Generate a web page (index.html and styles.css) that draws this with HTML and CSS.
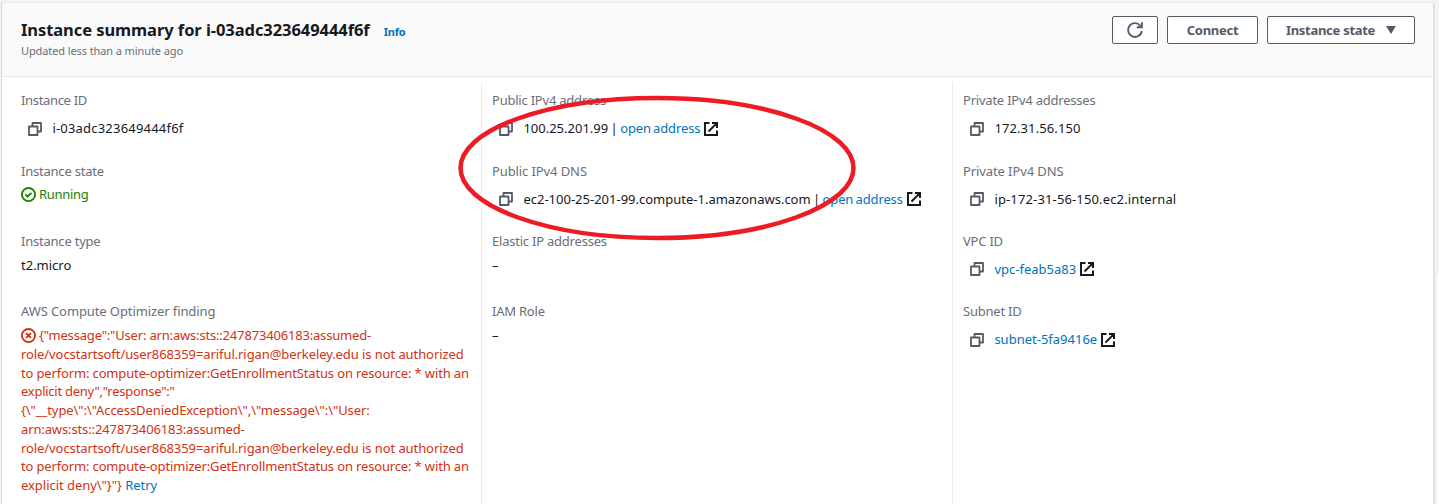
FILE: index.html
```html
<!DOCTYPE html>
<html lang="en">
<head>
<meta charset="utf-8">
<title>Instance summary</title>
<link rel="stylesheet" href="styles.css">
</head>
<body>
<svg class="sprite" aria-hidden="true">
  <symbol id="copy" viewBox="0 0 14 14"><path d="M1 4.5h8.5V13H1zM4.5 4.5V1H13v8.5H9.5" fill="none" stroke="#545b64" stroke-width="1.8" stroke-linejoin="round"/></symbol>
  <symbol id="external" viewBox="0 0 14 14"><path d="M5.5 1H1v12h12V8.5M8 1h5v5M12.6 1.4L4.5 9.5" fill="none" stroke="#16191f" stroke-width="2"/></symbol>
</svg>
<main class="card">
  <header class="header">
    <div class="heading">
      <div class="title-row"><h1 class="title">Instance summary for i-03adc323649444f6f</h1><a class="info">Info</a></div>
      <p class="updated">Updated less than a minute ago</p>
    </div>
    <div class="actions">
      <button class="btn btn-refresh" aria-label="Refresh"><svg class="refresh" viewBox="0 0 16 16"><path d="M14.8 9A6.9 6.9 0 1 1 13.4 3.8M14.9 .2v5.1H9.8" fill="none" stroke="#545b64" stroke-width="1.9"/></svg></button>
      <button class="btn btn-connect">Connect</button>
      <button class="btn btn-state">Instance state<svg class="caret" viewBox="0 0 10 8"><path d="M0 0h10L5 8z" fill="#545b64"/></svg></button>
    </div>
  </header>
  <div class="columns">
    <section class="col">
      <div class="item"><div class="label label-short">Instance ID</div><div class="value copyable"><svg class="copy"><use href="#copy"/></svg><span class="id">i-03adc323649444f6f</span></div></div>
      <div class="item"><div class="label">Instance state</div><div class="value ok"><svg class="status" viewBox="0 0 16 16"><g fill="none" stroke="#1d8102" stroke-width="2"><circle cx="8" cy="8" r="7"/><path d="M4.7 7.8l2.4 2.4 4-4"/></g></svg>Running</div></div>
      <div class="item"><div class="label">Instance type</div><div class="value">t2.micro</div></div>
      <div class="item"><div class="label label-long">AWS Compute Optimizer finding</div><div class="value error"><svg class="status" viewBox="0 0 16 16"><g fill="none" stroke="#d13212" stroke-width="2"><circle cx="8" cy="8" r="7"/><path d="M5.4 5.4l5.2 5.2M10.6 5.4l-5.2 5.2"/></g></svg><span class="e1">{"message":"User: arn:aws:sts::247873406183:assumed-</span><br><span class="e2">role/vocstartsoft/user868359=ariful.rigan@berkeley.edu is not authorized</span><br><span class="e3">to perform: compute-optimizer:GetEnrollmentStatus on resource: * with an</span><br><span class="e4">explicit deny","response":"</span><br><span class="e5">{\"__type\":\"AccessDeniedException\",\"message\":\"User:</span><br><span class="e6">arn:aws:sts::247873406183:assumed-</span><br><span class="e2">role/vocstartsoft/user868359=ariful.rigan@berkeley.edu is not authorized</span><br><span class="e3">to perform: compute-optimizer:GetEnrollmentStatus on resource: * with an</span><br><span class="e7">explicit deny\"}"} <a>Retry</a></span></div></div>
    </section>
    <section class="col">
      <div class="item"><div class="label">Public IPv4 address</div><div class="value copyable"><svg class="copy"><use href="#copy"/></svg><span class="linked">100.25.201.99 | <a>open address</a></span><svg class="ext"><use href="#external"/></svg></div></div>
      <div class="item"><div class="label label-long">Public IPv4 DNS</div><div class="value copyable"><svg class="copy"><use href="#copy"/></svg><span class="linked">ec2-100-25-201-99.compute-1.amazonaws.com | <a>open address</a></span><svg class="ext"><use href="#external"/></svg></div></div>
      <div class="item"><div class="label">Elastic IP addresses</div><div class="value">–</div></div>
      <div class="item"><div class="label">IAM Role</div><div class="value">–</div></div>
    </section>
    <section class="col">
      <div class="item"><div class="label">Private IPv4 addresses</div><div class="value copyable"><svg class="copy"><use href="#copy"/></svg><span class="pip">172.31.56.150</span></div></div>
      <div class="item"><div class="label label-long">Private IPv4 DNS</div><div class="value copyable"><svg class="copy"><use href="#copy"/></svg><span class="pdns">ip-172-31-56-150.ec2.internal</span></div></div>
      <div class="item"><div class="label">VPC ID</div><div class="value copyable"><svg class="copy"><use href="#copy"/></svg><a>vpc-feab5a83</a><svg class="ext"><use href="#external"/></svg></div></div>
      <div class="item"><div class="label">Subnet ID</div><div class="value copyable"><svg class="copy"><use href="#copy"/></svg><a>subnet-5fa9416e</a><svg class="ext"><use href="#external"/></svg></div></div>
    </section>
  </div>
</main>
<div class="page-edge"></div>
<svg class="annotation" viewBox="0 0 400 146"><ellipse cx="200" cy="73" rx="196.5" ry="70" fill="none" stroke="#ed1c24" stroke-width="4.5"/></svg>
</body>
</html>
```

FILE: styles.css
```css
* { box-sizing: border-box; }
body {
  margin: 0;
  height: 504px;
  overflow: hidden;
  display: flex;
  background: #f2f3f3;
  color: #16191f;
  font: 13px/18.75px "Noto Sans", "Open Sans", sans-serif;
}
.sprite { position: absolute; width: 0; height: 0; }
.card {
  width: 1434px;
  height: 502px;
  margin: 2px 0 0 1px;
  flex: none;
  background: #fff;
  border: 1px solid #d5dbdb;
  border-top-color: #eaeded;
  border-right: 2px solid #dfe3e3;
  border-bottom: 0;
}
.header {
  height: 74px;
  display: flex;
  justify-content: space-between;
  padding: 13px 18px 0 19px;
  background: #fafafa;
  border-bottom: 1px solid #eaeded;
}
.heading { padding-top: 1px; }
.title-row { display: flex; align-items: baseline; gap: 14px; height: 25px; }
.title { margin: 0; font-size: 16.5px; line-height: 26px; font-weight: 700; letter-spacing: -.07px; white-space: nowrap; }
.info { font-size: 11px; font-weight: 700; letter-spacing: -.2px; }
.updated { margin: 0; font-size: 11px; line-height: 18px; letter-spacing: -.1px; color: #687078; }
.actions { display: flex; gap: 9px; }
.btn {
  height: 28px;
  display: flex;
  align-items: center;
  justify-content: center;
  padding: 0;
  border: 1px solid #545b64;
  border-radius: 2px;
  background: #fff;
  color: #545b64;
  font: 700 13px/18px "Noto Sans", "Open Sans", sans-serif;
  letter-spacing: -.28px;
}
.btn-refresh { width: 46px; }
.btn-connect { width: 91px; }
.btn-state { width: 148px; }
.refresh { width: 16px; height: 16px; overflow: visible; }
.caret { width: 10px; height: 8px; margin-left: 11px; }
.columns { display: grid; grid-template-columns: 479px 471px 1fr; padding-top: 5px; height: 428px; }
.col { padding: 9.3px 0 0 19px; height: 423px; white-space: nowrap; }
.col + .col { border-left: 1px solid #eaeded; padding-left: 10px; }
.item { height: 70.4px; }
.label { color: #687078; letter-spacing: -.22px; }
.label-short { letter-spacing: -.33px; }
.label-long { letter-spacing: -.1px; }
.value { padding-top: 4.8px; }
.copyable { display: flex; align-items: center; padding: 9.2px 0 0 6.6px; }
.copy { width: 14px; height: 14px; margin-right: 10.8px; }
.ext { width: 14px; height: 14px; margin-left: 4px; }
.status { width: 15px; height: 15px; margin: 0 3.4px 0 -.4px; vertical-align: -3px; }
.ok { color: #1d8102; letter-spacing: -.3px; }
.error { color: #d13212; }
.id { letter-spacing: .2px; }
.pip { letter-spacing: .1px; }
.pdns { letter-spacing: .14px; }
.linked { word-spacing: -1px; }
.linked a { letter-spacing: -.13px; }
.e1 { letter-spacing: -.18px; }
.e2 { letter-spacing: -.08px; }
.e3 { letter-spacing: -.15px; }
.e4 { letter-spacing: -.26px; }
.e5 { letter-spacing: -.08px; }
.e6 { letter-spacing: -.12px; }
.e7 { letter-spacing: -.04px; }
a { color: #0073bb; }
.page-edge { align-self: flex-end; width: 2px; height: 228px; margin-left: auto; background: #fff; }
.annotation { position: absolute; left: 457px; top: 95px; width: 400px; height: 146px; }
```
